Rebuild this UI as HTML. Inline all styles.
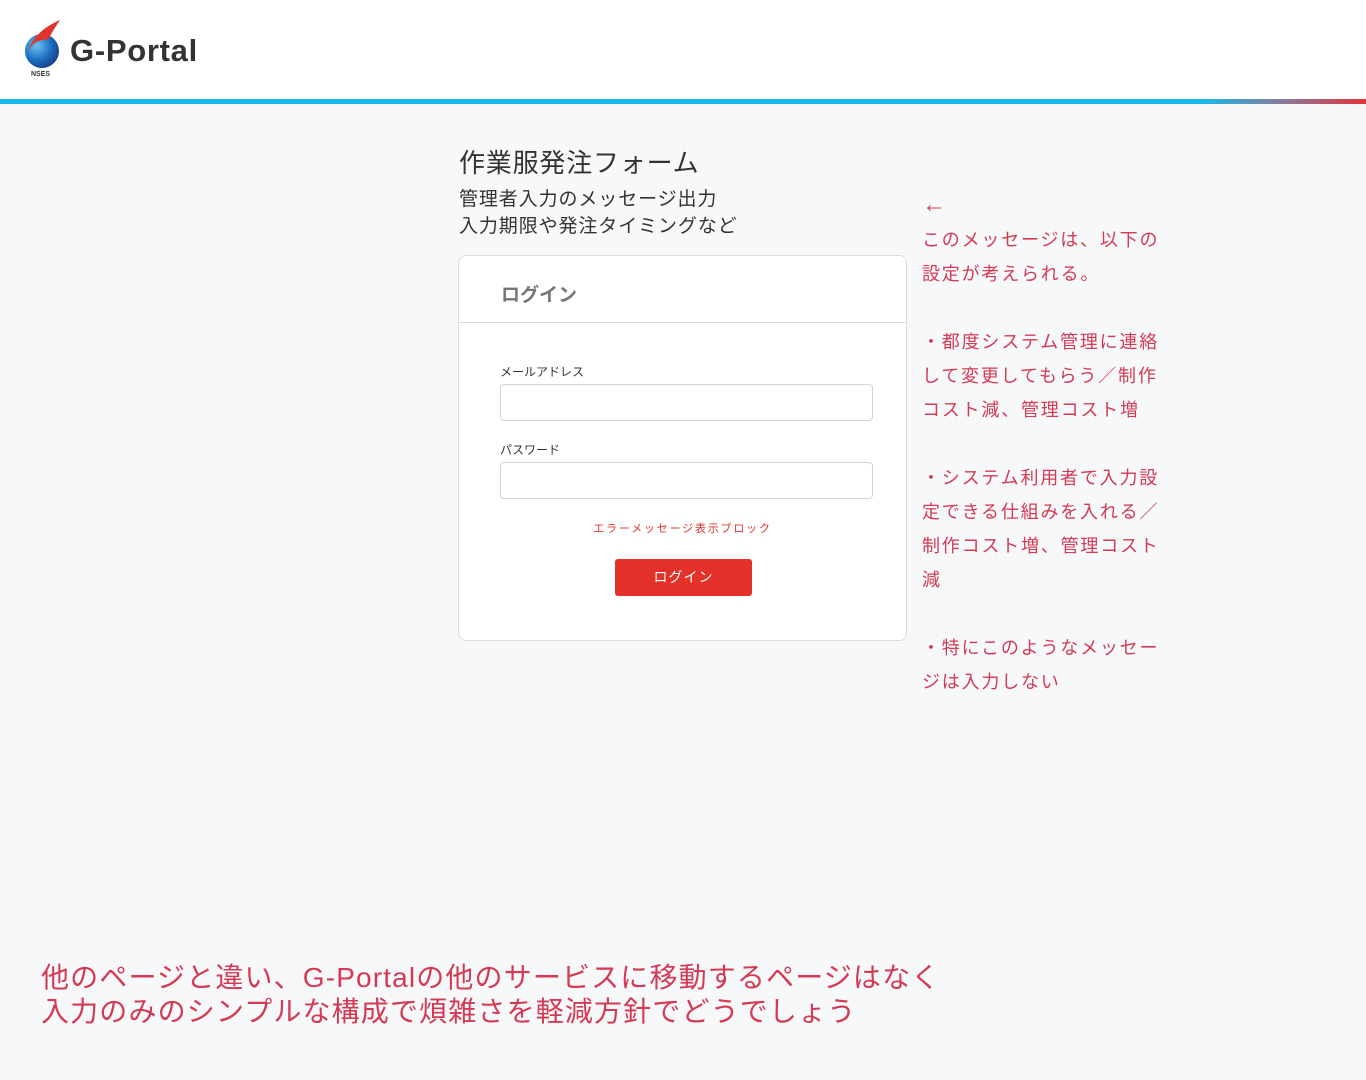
<!DOCTYPE html>
<html><head><meta charset="utf-8"><style>
*{margin:0;padding:0;box-sizing:border-box}
body{width:1366px;height:1080px;background:#f7f8fa;font-family:"Liberation Sans","Noto Sans CJK JP",sans-serif;position:relative;overflow:hidden;color:#333}
.hdr{position:absolute;left:0;top:0;width:1366px;height:99px;background:#fff}
.bar{position:absolute;left:0;top:99px;width:1366px;height:5px;background:linear-gradient(90deg,#1bb7ea 0%,#1bb7ea 88%,#8a7a9a 94%,#e0343a 100%)}
.abs{position:absolute;white-space:nowrap}
.card{position:absolute;left:458px;top:255px;width:449px;height:386px;background:#fff;border:1px solid #dcdcdc;border-radius:8px}
.inp{position:absolute;left:41px;width:373px;height:37px;border:1px solid #d4d4d4;border-radius:4px;background:#fff}
.red{color:#d43a54}
</style></head><body>
<div class="hdr">
<svg class="abs" style="left:18px;top:18px" width="46" height="62" viewBox="0 0 46 62">
<defs><radialGradient id="g" cx="0.35" cy="0.35" r="0.7"><stop offset="0" stop-color="#6cc3f0"/><stop offset="0.6" stop-color="#1a6fc0"/><stop offset="1" stop-color="#1a3f8a"/></radialGradient></defs>
<circle cx="24" cy="33" r="17" fill="url(#g)"/>
<path d="M42 2 C28 8 14 18 9 36 C12 26 22 20 30 22 C34 14 38 8 42 2Z" fill="#e0342e"/>
<text x="13" y="58" font-size="7" font-weight="bold" fill="#333" font-family="Liberation Sans">NSES</text>
</svg>
<div class="abs" style="left:70px;top:33px;font-size:31px;font-weight:bold;color:#333;letter-spacing:0.7px">G-Portal</div>
</div>
<div class="bar"></div>
<div class="abs" style="left:459px;top:143px;font-size:26px;color:#333;letter-spacing:0.8px">作業服発注フォーム</div>
<div class="abs" style="left:459px;top:186px;font-size:19px;line-height:27px;color:#333;letter-spacing:0.9px">管理者入力のメッセージ出力<br>入力期限や発注タイミングなど</div>
<div class="card">
<div class="abs" style="left:42px;top:24px;font-size:19px;font-weight:bold;color:#777">ログイン</div>
<div style="position:absolute;left:0;top:66px;width:100%;height:1px;background:#dcdcdc"></div>
<div class="abs" style="left:41px;top:107px;font-size:12px;color:#333">メールアドレス</div>
<div class="inp" style="top:128px"></div>
<div class="abs" style="left:41px;top:185px;font-size:12px;color:#333">パスワード</div>
<div class="inp" style="top:206px"></div>
<div class="abs" style="left:0;width:100%;text-align:center;top:264px;font-size:11px;color:#e0342e;letter-spacing:1.8px">エラーメッセージ表示ブロック</div>
<div class="abs" style="left:156px;top:303px;width:137px;height:37px;background:#e4322b;border-radius:3px;color:#fff;font-size:14px;text-align:center;line-height:37px;letter-spacing:1px">ログイン</div>
</div>
<div class="abs red" style="left:922px;top:188px;font-size:18px;line-height:34px;letter-spacing:1.8px"><span style="font-size:24px">←</span><br>このメッセージは、以下の<br>設定が考えられる。<br><br>・都度システム管理に連絡<br>して変更してもらう／制作<br>コスト減、管理コスト増<br><br>・システム利用者で入力設<br>定できる仕組みを入れる／<br>制作コスト増、管理コスト<br>減<br><br>・特にこのようなメッセー<br>ジは入力しない</div>
<div class="abs red" style="left:41px;top:961px;font-size:28px;line-height:34px;letter-spacing:1.15px">他のページと違い、G-Portalの他のサービスに移動するページはなく<br>入力のみのシンプルな構成で煩雑さを軽減方針でどうでしょう</div>
</body></html>
